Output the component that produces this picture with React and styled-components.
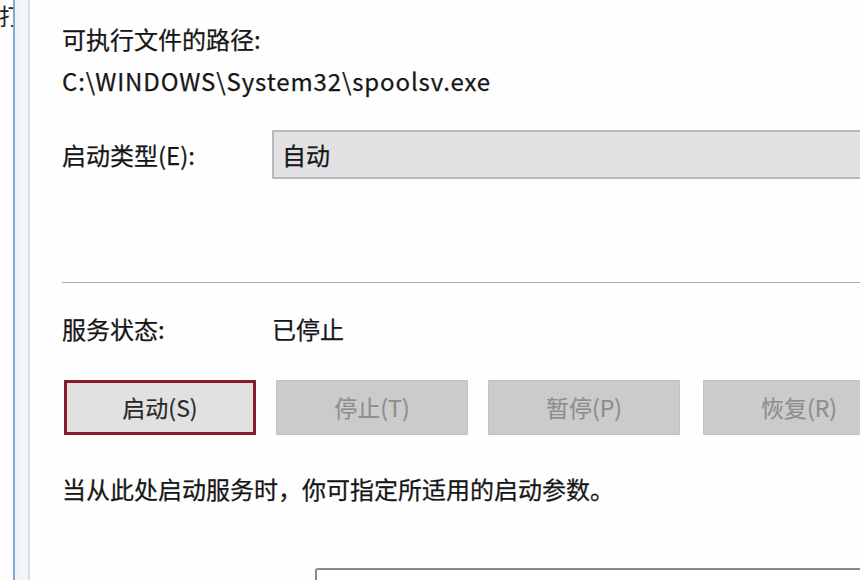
import React from "react";
import styled, { createGlobalStyle } from "styled-components";

const Global = createGlobalStyle`
  html, body { margin: 0; padding: 0; background: #fefefe; overflow: hidden; }
  body { font-family: "Noto Sans CJK SC", "Noto Sans", sans-serif; color: #161616; }
`;

const Page = styled.div`
  display: flex;
  width: 860px;
  height: 580px;
  overflow: hidden;
  background: #fefefe;
`;

const EdgeStrip = styled.div`
  width: 13px;
  flex: none;
  overflow: hidden;
  display: flex;
  justify-content: flex-end;
  background: #fdfdfd;
`;

const EdgeGlyph = styled.span`
  font-size: 23px;
  line-height: 30px;
  margin-right: -9px;
  height: 30px;
  white-space: nowrap;
  color: #222;
`;

const BlueRule = styled.div`
  width: 2px;
  flex: none;
  background: #7eaad6;
`;

const Band = styled.div`
  width: 13px;
  flex: none;
  background: linear-gradient(to right, #eef3f9, #f4f6f8);
`;

const GrayRule = styled.div`
  width: 2px;
  flex: none;
  background: #dcdcdc;
`;

const Content = styled.div`
  flex: 1;
  min-width: 0;
  padding: 24px 0 0 32px;
  display: flex;
  flex-direction: column;
`;

const Text = styled.div`
  font-size: 24px;
  line-height: 30px;
  height: 30px;
  white-space: nowrap;
  color: #161616;
  -webkit-text-stroke: 0.25px #161616;
  margin-top: ${(p) => p.$mt || 0}px;
`;

const PathText = styled(Text)`
  letter-spacing: 0.88px;
`;

const Row = styled.div`
  display: flex;
  align-items: center;
  margin-top: ${(p) => p.$mt || 0}px;
`;

const RowLabel = styled(Text)`
  width: 210px;
  flex: none;
`;

const Combo = styled.div`
  flex: none;
  width: 620px;
  height: 49px;
  box-sizing: border-box;
  border: 2px solid #b9b9bb;
  border-right: none;
  border-radius: 2px 0 0 2px;
  background: #e2e2e4;
  display: flex;
  align-items: center;
  padding-left: 8px;
  font-size: 24px;
  color: #161616;
  -webkit-text-stroke: 0.25px #161616;
`;

const Separator = styled.div`
  height: 2px;
  background: #adadad;
  margin-top: 103px;
`;

const ButtonRow = styled.div`
  display: flex;
  gap: 20px;
  margin-top: 36px;
  padding-left: 2px;
`;

const Button = styled.div`
  flex: none;
  width: 192px;
  height: 55px;
  box-sizing: border-box;
  display: flex;
  align-items: center;
  justify-content: center;
  font-size: 23px;
  background: ${(p) => (p.$disabled ? "#cbcbcc" : "#e1e1e2")};
  color: ${(p) => (p.$disabled ? "#8e8e8e" : "#2a2a2a")};
  -webkit-text-stroke: 0.2px ${(p) => (p.$disabled ? "#8e8e8e" : "#2a2a2a")};
  border: ${(p) => (p.$focused ? "3px solid #8c1830" : "1px solid #c2c2c2")};
  margin-left: ${(p) => p.$ml || 0}px;
`;

const InputBox = styled.div`
  margin-top: 64px;
  margin-left: 253px;
  height: 40px;
  border-top: 2px solid #8a8a8a;
  border-left: 2px solid #8a8a8a;
  border-radius: 3px 0 0 0;
  background: #ffffff;
`;

export default function App() {
  return (
    <Page>
      <Global />
      <EdgeStrip>
        <EdgeGlyph>打</EdgeGlyph>
      </EdgeStrip>
      <BlueRule />
      <Band />
      <GrayRule />
      <Content>
        <Text>可执行文件的路径:</Text>
        <PathText $mt={12}>C:\WINDOWS\System32\spoolsv.exe</PathText>
        <Row $mt={34}>
          <RowLabel>启动类型(E):</RowLabel>
          <Combo>自动</Combo>
        </Row>
        <Separator />
        <Row $mt={31}>
          <RowLabel>服务状态:</RowLabel>
          <Text>已停止</Text>
        </Row>
        <ButtonRow>
          <Button $focused>启动(S)</Button>
          <Button $disabled>停止(T)</Button>
          <Button $disabled>暂停(P)</Button>
          <Button $disabled $ml={3}>恢复(R)</Button>
        </ButtonRow>
        <Text $mt={39}>当从此处启动服务时，你可指定所适用的启动参数。</Text>
        <InputBox />
      </Content>
    </Page>
  );
}
